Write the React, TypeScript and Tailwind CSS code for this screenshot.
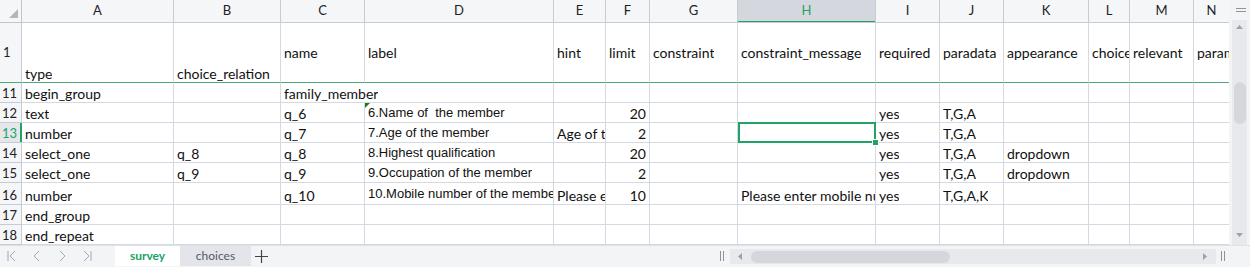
import React from "react";

type Cell = { t?: string; right?: boolean; arial?: boolean; tri?: boolean; span?: boolean; v?: "end" | "center" };

const W = [
  "w-[152px]",
  "w-[107px]",
  "w-[84px]",
  "w-[189px]",
  "w-[52px]",
  "w-[44px]",
  "w-[88px]",
  "w-[138px]",
  "w-[64px]",
  "w-[64px]",
  "w-[85px]",
  "w-[41px]",
  "w-[64px]",
  "w-[35px]",
];
const LETTERS = ["A", "B", "C", "D", "E", "F", "G", "H", "I", "J", "K", "L", "M", "N"];

const header: Cell[] = [
  { t: "type", v: "end" },
  { t: "choice_relation", v: "end" },
  { t: "name", v: "center" },
  { t: "label", v: "center" },
  { t: "hint", v: "center" },
  { t: "limit", v: "center" },
  { t: "constraint", v: "center" },
  { t: "constraint_message", v: "center" },
  { t: "required", v: "center" },
  { t: "paradata", v: "center" },
  { t: "appearance", v: "center" },
  { t: "choice", v: "center" },
  { t: "relevant", v: "center" },
  { t: "parameters", v: "center" },
];

type Row = { n: string; h: string; cells: (Cell | null)[] };

const rows: Row[] = [
  { n: "11", h: "h-[20px]", cells: [{ t: "begin_group" }, {}, { t: "family_member", span: true }, null, {}, {}, {}, {}, {}, {}, {}, {}, {}, {}] },
  {
    n: "12",
    h: "h-[20px]",
    cells: [{ t: "text" }, {}, { t: "q_6" }, { t: "6.Name of  the member", arial: true, tri: true }, {}, { t: "20", right: true }, {}, {}, { t: "yes" }, { t: "T,G,A" }, {}, {}, {}, {}],
  },
  {
    n: "13",
    h: "h-[20px]",
    cells: [{ t: "number" }, {}, { t: "q_7" }, { t: "7.Age of the member", arial: true }, { t: "Age of the member" }, { t: "2", right: true }, {}, {}, { t: "yes" }, { t: "T,G,A" }, {}, {}, {}, {}],
  },
  {
    n: "14",
    h: "h-[20px]",
    cells: [{ t: "select_one" }, { t: "q_8" }, { t: "q_8" }, { t: "8.Highest qualification", arial: true }, {}, { t: "20", right: true }, {}, {}, { t: "yes" }, { t: "T,G,A" }, { t: "dropdown" }, {}, {}, {}],
  },
  {
    n: "15",
    h: "h-[20px]",
    cells: [{ t: "select_one" }, { t: "q_9" }, { t: "q_9" }, { t: "9.Occupation of the member", arial: true }, {}, { t: "2", right: true }, {}, {}, { t: "yes" }, { t: "T,G,A" }, { t: "dropdown" }, {}, {}, {}],
  },
  {
    n: "16",
    h: "h-[22px]",
    cells: [
      { t: "number" },
      {},
      { t: "q_10" },
      { t: "10.Mobile number of the member", arial: true },
      { t: "Please enter mobile number" },
      { t: "10", right: true },
      {},
      { t: "Please enter mobile number" },
      { t: "yes" },
      { t: "T,G,A,K" },
      {},
      {},
      {},
      {},
    ],
  },
  { n: "17", h: "h-[20px]", cells: [{ t: "end_group" }, {}, {}, {}, {}, {}, {}, {}, {}, {}, {}, {}, {}, {}] },
  { n: "18", h: "h-[20px]", cells: [{ t: "end_repeat" }, {}, {}, {}, {}, {}, {}, {}, {}, {}, {}, {}, {}, {}] },
];

const LATO = "font-['Lato',sans-serif] text-[14px] leading-[17px] text-[#111]";
const ARIAL = "font-['Liberation_Sans',Arial,sans-serif] text-[13px] leading-[15px] text-[#111]";

function DataCell({ c, i, rowN }: { c: Cell; i: number; rowN: string }) {
  const w = c.span ? "w-[273px]" : W[i];
  const last = i === 13;
  const selected = rowN === "13" && i === 7;
  return (
    <div
      className={`relative shrink-0 ${w} h-full border-b border-[#d5d9e2] ${last ? "" : "border-r"} flex ${
        c.arial ? "items-center" : "items-end"
      } ${c.right ? "justify-end pr-[3px]" : "justify-start pl-[3px]"} ${selected ? "z-10 overflow-visible" : "overflow-hidden"}`}
    >
      {c.t && (
        <span className={`block min-w-0 max-w-full overflow-hidden whitespace-pre ${c.arial ? ARIAL : LATO}`}>{c.t}</span>
      )}
      {c.tri && (
        <svg className="absolute left-0 top-0" width="5" height="5" viewBox="0 0 5 5">
          <polygon points="0,0 5,0 0,5" fill="#1e7a1e" />
        </svg>
      )}
      {selected && (
        <>
          <div className="absolute -top-[1px] left-0 -right-[1px] -bottom-[1px] border-2 border-[#21a366]" />
          <div className="absolute -right-[3px] -bottom-[3px] w-[5px] h-[5px] bg-[#21a366] outline outline-1 outline-white" />
        </>
      )}
    </div>
  );
}

function RowHeader({ n, center }: { n: string; center?: boolean }) {
  const sel = n === "13";
  return (
    <div
      className={`relative shrink-0 w-[22px] h-full border-r border-b border-[#c6cbd6] ${
        sel ? "bg-[#e4e6ea] text-[#21a366]" : "bg-[#f5f6f8] text-[#222]"
      } flex ${center ? "items-center" : "items-end"} pl-[2px] font-['Lato',sans-serif] text-[13px] leading-[17px]`}
    >
      {n}
      {sel && <div className="absolute right-[-1px] top-0 bottom-0 w-[2px] bg-[#21a366]" />}
    </div>
  );
}

function Chev({ d }: { d: string }) {
  return (
    <svg width="12" height="14" viewBox="0 0 12 14" fill="none" stroke="#a3a8b3" strokeWidth="1">
      <path d={d} />
    </svg>
  );
}

export default function App() {
  return (
    <div className="w-[1250px] h-[267px] bg-white overflow-hidden flex flex-col select-none">
      <div className="flex h-[245px]">
        <div className="w-[1229px] overflow-hidden flex flex-col">
          {/* column letters */}
          <div className="flex h-[23px] shrink-0">
            <div className="relative shrink-0 w-[22px] h-full bg-[#f5f6f8] border-r border-b border-[#c0c5d1]">
              <svg className="absolute left-[9px] top-[9px]" width="9" height="9" viewBox="0 0 9 9">
                <polygon points="9,0 9,9 0,9" fill="#b4b6ba" />
              </svg>
            </div>
            {LETTERS.map((l, i) => {
              const sel = l === "H";
              return (
                <div
                  key={l}
                  className={`relative shrink-0 ${W[i]} h-full ${i === 13 ? "" : "border-r"} border-b border-[#c6cbd6] ${
                    sel ? "bg-[#d4d7de] text-[#21a366]" : "bg-[#f5f6f8] text-[#222]"
                  } flex items-center justify-center font-['Lato',sans-serif] text-[13px] overflow-hidden`}
                >
                  {l}
                  {sel && <div className="absolute left-0 right-[-1px] bottom-[-1px] h-[2px] bg-[#21a366]" />}
                </div>
              );
            })}
          </div>
          {/* row 1 */}
          <div className="flex h-[60px] shrink-0">
            <div className="shrink-0 w-[22px] h-full border-r border-b border-r-[#c6cbd6] border-b-[#4fa77a] bg-[#f5f6f8] flex items-center pl-[3px] font-['Lato',sans-serif] text-[13px] text-[#222]">
              1
            </div>
            {header.map((c, i) => (
              <div
                key={i}
                className={`shrink-0 ${W[i]} h-full ${i === 13 ? "" : "border-r"} border-b border-r-[#d5d9e2] border-b-[#4fa77a] flex ${
                  c.v === "end" ? "items-end" : "items-center"
                } pl-[3px] overflow-hidden`}
              >
                <span className={`block min-w-0 max-w-full overflow-hidden whitespace-nowrap ${LATO}`}>{c.t}</span>
              </div>
            ))}
          </div>
          {rows.map((r) => (
            <div key={r.n} className={`flex ${r.h} shrink-0`}>
              <RowHeader n={r.n} />
              {r.cells.map((c, i) => (c ? <DataCell key={i} c={c} i={i} rowN={r.n} /> : null))}
            </div>
          ))}
        </div>
        {/* vertical scrollbar */}
        <div className="w-[21px] h-full bg-[#f3f4f6] flex flex-col">
          <div className="h-[20px] flex flex-col items-center justify-center gap-[2px] pl-[3px]">
            <div className="w-[10px] h-[1px] bg-[#8d929c]" />
            <div className="w-[10px] h-[1px] bg-[#8d929c]" />
          </div>
          <div className="flex-1 ml-[3px] mr-[3px] bg-[#e8e9ed] flex flex-col items-center">
            <svg className="mt-[5px]" width="7" height="4" viewBox="0 0 7 4">
              <polygon points="0,4 7,4 3.5,0" fill="#9ca1ab" />
            </svg>
            <div className="mt-[53px] w-[12px] h-[42px] rounded-full bg-[#d5d7dd]" />
            <div className="flex-1" />
            <svg className="mb-[8px]" width="7" height="4" viewBox="0 0 7 4">
              <polygon points="0,0 7,0 3.5,4" fill="#9ca1ab" />
            </svg>
          </div>
        </div>
      </div>
      {/* bottom bar */}
      <div className="flex-1 bg-[#f3f4f6] border-t border-[#dfe1e6] flex items-start relative">
        <div className="flex items-center h-[20px] pl-[6px] gap-[13px]">
          <Chev d="M2 2 L2 12 M9 2 L4 7 L9 12" />
          <Chev d="M8 2 L3 7 L8 12" />
          <Chev d="M4 2 L9 7 L4 12" />
          <Chev d="M3 2 L8 7 L3 12 M10 2 L10 12" />
        </div>
        <div className="ml-[22px] w-[65px] h-[20px] bg-white flex items-center justify-center font-['Lato',sans-serif] text-[12px] font-bold text-[#21a366]">
          survey
        </div>
        <div className="w-[71px] h-[20px] bg-[#e3e5ea] flex items-center justify-center font-['Lato',sans-serif] text-[12px] text-[#555a63]">
          choices
        </div>
        <div className="ml-[4px] h-[20px] flex items-center">
          <svg width="13" height="13" viewBox="0 0 13 13" stroke="#444" strokeWidth="1.2">
            <path d="M6.5 0 V13 M0 6.5 H13" />
          </svg>
        </div>
        <div className="flex-1" />
        <div className="h-[20px] flex items-center mr-[6px]">
          <div className="w-[1px] h-[10px] bg-[#8d929c]" />
          <div className="w-[1px] h-[10px] bg-[#8d929c] ml-[2px]" />
        </div>
        <div className="w-[486px] mt-[3px] h-[15px] bg-[#e8e9ed] flex items-center">
          <svg className="ml-[8px]" width="4" height="7" viewBox="0 0 4 7">
            <polygon points="4,0 4,7 0,3.5" fill="#9ca1ab" />
          </svg>
          <div className="ml-[9px] w-[199px] h-[12px] rounded-full bg-[#d5d7dd]" />
          <div className="flex-1" />
          <svg className="mr-[9px]" width="4" height="7" viewBox="0 0 4 7">
            <polygon points="0,0 0,7 4,3.5" fill="#9ca1ab" />
          </svg>
        </div>
        <div className="h-[20px] flex items-center ml-[5px] mr-[25px]">
          <div className="w-[1px] h-[10px] bg-[#8d929c]" />
          <div className="w-[1px] h-[10px] bg-[#8d929c] ml-[2px]" />
        </div>
      </div>
    </div>
  );
}
